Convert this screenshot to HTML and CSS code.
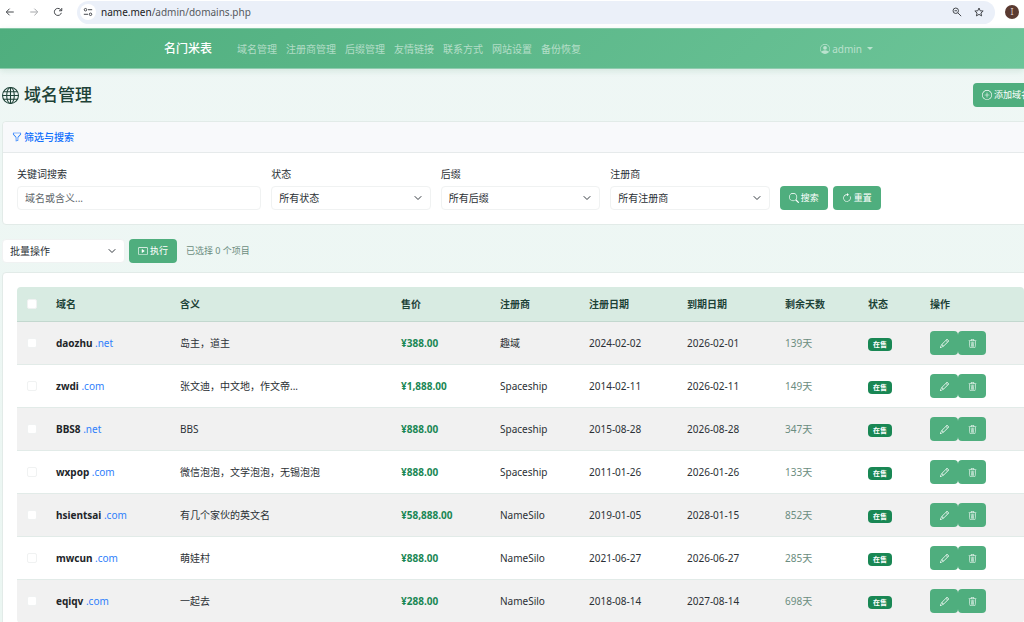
FILE: index.html
```html
<!DOCTYPE html>
<html lang="zh-CN">
<head>
<meta charset="utf-8">
<title>域名管理 - 名门米表</title>
<link rel="stylesheet" href="styles.css">
</head>
<body>
<svg class="sprite" aria-hidden="true">
  <symbol id="i-pencil" viewBox="0 0 16 16"><path d="M12.146.146a.5.5 0 0 1 .708 0l3 3a.5.5 0 0 1 0 .708l-10 10a.5.5 0 0 1-.168.11l-5 2a.5.5 0 0 1-.65-.65l2-5a.5.5 0 0 1 .11-.168zM11.207 2.5 13.5 4.793 14.793 3.5 12.5 1.207zm1.586 3L10.5 3.207 4 9.707V10h.5a.5.5 0 0 1 .5.5v.5h.5a.5.5 0 0 1 .5.5v.5h.293zm-9.761 5.175-.106.106-1.528 3.821 3.821-1.528.106-.106A.5.5 0 0 1 5 12.5V12h-.5a.5.5 0 0 1-.5-.5V11h-.5a.5.5 0 0 1-.468-.325"/></symbol>
  <symbol id="i-trash" viewBox="0 0 16 16"><path d="M6.5 1h3a.5.5 0 0 1 .5.5v1H6v-1a.5.5 0 0 1 .5-.5M11 2.500v-1A1.500 1.500 0 0 0 9.500 0h-3A1.500 1.500 0 0 0 5 1.500v1H1.500a.5.5 0 0 0 0 1h.538l.853 10.660A2 2 0 0 0 4.885 16h6.230a2 2 0 0 0 1.994-1.840l.853-10.660h.538a.5.5 0 0 0 0-1zm1.958 1-.846 10.580a1 1 0 0 1-.997.920h-6.230a1 1 0 0 1-.997-.920L3.042 3.500zm-7.487 1a.5.5 0 0 1 .528.470l.5 8.500a.5.5 0 0 1-.998.060L5 5.030a.5.5 0 0 1 .470-.530m5.058 0a.5.5 0 0 1 .470.530l-.5 8.500a.5.5 0 1 1-.998-.060l.5-8.500a.5.5 0 0 1 .528-.470M8 4.500a.5.5 0 0 1 .5.5v8.500a.5.5 0 0 1-1 0V5a.5.5 0 0 1 .5-.5"/></symbol>
</svg>

<header class="browser">
  <div class="browser-nav">
    <button type="button" aria-label="后退"><svg viewBox="0 0 24 24"><path class="line" d="M21 12H4M11 4l-8 8 8 8"/></svg></button>
    <button type="button" aria-label="前进" disabled><svg viewBox="0 0 24 24"><path class="line" d="M3 12h17M13 4l8 8-8 8"/></svg></button>
    <button type="button" aria-label="刷新"><svg viewBox="0 0 24 24"><path class="line" d="M20 14a8.500 8.500 0 1 1-2-8l3 3M21 2.500V9h-6.500"/></svg></button>
  </div>
  <div class="address">
    <span class="site-info"><svg viewBox="0 0 24 24"><path class="line" d="M12 6.500h10M2 17.500h10"/><circle class="line" cx="6" cy="6.500" r="3"/><circle class="line" cx="18" cy="17.500" r="3"/></svg></span>
    <span class="url">name.men<span class="path">/admin/domains.php</span></span>
    <button type="button" aria-label="缩放"><svg viewBox="0 0 24 24"><circle class="line" cx="9" cy="9" r="6.500"/><path class="line" d="M14 14l8 8M6 9h6"/></svg></button>
    <button type="button" aria-label="收藏"><svg viewBox="0 0 24 24"><path class="line" d="M12 2.500l2.900 6.600 7.100.600-5.400 4.700 1.700 7L12 17.700l-6.300 3.700 1.700-7L2 9.700l7.100-.600z"/></svg></button>
  </div>
  <button type="button" class="avatar">I</button>
</header>

<nav class="navbar">
  <a class="brand" href="#">名门米表</a>
  <ul class="menu">
    <li><a href="#">域名管理</a></li>
    <li><a href="#">注册商管理</a></li>
    <li><a href="#">后缀管理</a></li>
    <li><a href="#">友情链接</a></li>
    <li><a href="#">联系方式</a></li>
    <li><a href="#">网站设置</a></li>
    <li><a href="#">备份恢复</a></li>
  </ul>
  <a class="user" href="#"><svg class="icon" viewBox="0 0 16 16"><path d="M11 6a3 3 0 1 1-6 0 3 3 0 0 1 6 0"/><path fill-rule="evenodd" d="M0 8a8 8 0 1 1 16 0A8 8 0 0 1 0 8m8-7a7 7 0 0 0-5.468 11.370C3.242 11.226 4.805 10 8 10s4.757 1.225 5.468 2.370A7 7 0 0 0 8 1"/></svg>admin<span class="caret"></span></a>
</nav>

<main class="page">
  <div class="page-head">
    <h1><svg class="globe" viewBox="0 0 16 16"><g class="thin"><circle cx="8" cy="8" r="7.500"/><ellipse cx="8" cy="8" rx="3.600" ry="7.500"/><path d="M8 .5v15M.5 8h15M1.700 4.500h12.600M1.700 11.500h12.600"/></g></svg>域名管理</h1>
    <button type="button" class="btn"><svg class="icon" viewBox="0 0 16 16"><path d="M8 15A7 7 0 1 1 8 1a7 7 0 0 1 0 14m0 1A8 8 0 1 0 8 0a8 8 0 0 0 0 16"/><path d="M8 4a.5.5 0 0 1 .5.5v3h3a.5.5 0 0 1 0 1h-3v3a.5.5 0 0 1-1 0v-3h-3a.5.5 0 0 1 0-1h3v-3A.5.5 0 0 1 8 4"/></svg>添加域名</button>
  </div>

  <section class="card filter">
    <h2 class="card-header"><svg class="icon" viewBox="0 0 16 16"><path d="M1.500 1.500A.5.5 0 0 1 2 1h12a.5.5 0 0 1 .5.5v2a.5.5 0 0 1-.128.334L10 8.692V13.500a.5.5 0 0 1-.342.474l-3 1A.5.5 0 0 1 6 14.500V8.692L1.628 3.834A.5.5 0 0 1 1.500 3.500zm1 .5v1.308l4.372 4.858A.5.5 0 0 1 7 8.500v5.306l2-.666V8.500a.5.5 0 0 1 .128-.334L13.500 3.308V2z"/></svg>筛选与搜索</h2>
    <form class="filter-form">
      <div class="field wide"><label for="keyword">关键词搜索</label><input class="control" id="keyword" type="text" placeholder="域名或含义..."></div>
      <div class="field"><label for="status">状态</label><select class="control" id="status"><option>所有状态</option></select></div>
      <div class="field"><label for="suffix">后缀</label><select class="control" id="suffix"><option>所有后缀</option></select></div>
      <div class="field"><label for="registrar">注册商</label><select class="control" id="registrar"><option>所有注册商</option></select></div>
      <div class="field-actions">
        <button type="button" class="btn"><svg class="icon" viewBox="0 0 16 16"><path d="M11.742 10.344a6.500 6.500 0 1 0-1.397 1.398h-.001q.044.060.098.115l3.850 3.850a1 1 0 0 0 1.415-1.414l-3.850-3.850a1 1 0 0 0-.115-.100zM12 6.500a5.500 5.500 0 1 1-11 0 5.500 5.500 0 0 1 11 0"/></svg>搜索</button>
        <button type="reset" class="btn"><svg class="icon" viewBox="0 0 16 16"><path fill-rule="evenodd" d="M8 3a5 5 0 1 0 4.546 2.914.5.5 0 0 1 .908-.417A6 6 0 1 1 8 2z"/><path d="M8 4.466V.534a.25.25 0 0 1 .410-.192l2.360 1.966c.120.100.120.284 0 .384L8.410 4.658A.25.25 0 0 1 8 4.466"/></svg>重置</button>
      </div>
    </form>
  </section>

  <div class="bulk">
    <select class="control bulk-select" aria-label="批量操作"><option>批量操作</option></select>
    <button type="button" class="btn"><svg class="icon" viewBox="0 0 16 16"><path d="M6.790 5.093A.5.5 0 0 0 6 5.500v5a.5.5 0 0 0 .790.407l3.500-2.500a.5.5 0 0 0 0-.814z"/><path d="M0 4a2 2 0 0 1 2-2h12a2 2 0 0 1 2 2v8a2 2 0 0 1-2 2H2a2 2 0 0 1-2-2zm15 0a1 1 0 0 0-1-1H2a1 1 0 0 0-1 1v8a1 1 0 0 0 1 1h12a1 1 0 0 0 1-1z"/></svg>执行</button>
    <span class="selected-count">已选择 0 个项目</span>
  </div>

  <section class="card list">
    <table class="domains">
      <colgroup><col class="c-check"><col class="c-name"><col><col class="c-price"><col class="c-registrar"><col class="c-date"><col class="c-date"><col class="c-days"><col class="c-status"><col class="c-actions"></colgroup>
      <thead>
        <tr><th><input type="checkbox" aria-label="全选"></th><th>域名</th><th>含义</th><th>售价</th><th>注册商</th><th>注册日期</th><th>到期日期</th><th>剩余天数</th><th>状态</th><th>操作</th></tr>
      </thead>
      <tbody>
        <tr><td><input type="checkbox" aria-label="daozhu.net"></td><td><strong>daozhu</strong> <span class="tld">.net</span></td><td>岛主，道主</td><td class="price">¥388.00</td><td>趣域</td><td>2024-02-02</td><td>2026-02-01</td><td class="days">139天</td><td><span class="badge">在售</span></td><td><div class="actions"><button type="button" class="btn" aria-label="编辑"><svg class="icon"><use href="#i-pencil"/></svg></button><button type="button" class="btn" aria-label="删除"><svg class="icon"><use href="#i-trash"/></svg></button></div></td></tr>
        <tr><td><input type="checkbox" aria-label="zwdi.com"></td><td><strong>zwdi</strong> <span class="tld">.com</span></td><td>张文迪，中文地，作文帝...</td><td class="price">¥1,888.00</td><td>Spaceship</td><td>2014-02-11</td><td>2026-02-11</td><td class="days">149天</td><td><span class="badge">在售</span></td><td><div class="actions"><button type="button" class="btn" aria-label="编辑"><svg class="icon"><use href="#i-pencil"/></svg></button><button type="button" class="btn" aria-label="删除"><svg class="icon"><use href="#i-trash"/></svg></button></div></td></tr>
        <tr><td><input type="checkbox" aria-label="BBS8.net"></td><td><strong>BBS8</strong> <span class="tld">.net</span></td><td>BBS</td><td class="price">¥888.00</td><td>Spaceship</td><td>2015-08-28</td><td>2026-08-28</td><td class="days">347天</td><td><span class="badge">在售</span></td><td><div class="actions"><button type="button" class="btn" aria-label="编辑"><svg class="icon"><use href="#i-pencil"/></svg></button><button type="button" class="btn" aria-label="删除"><svg class="icon"><use href="#i-trash"/></svg></button></div></td></tr>
        <tr><td><input type="checkbox" aria-label="wxpop.com"></td><td><strong>wxpop</strong> <span class="tld">.com</span></td><td>微信泡泡，文学泡泡，无锡泡泡</td><td class="price">¥888.00</td><td>Spaceship</td><td>2011-01-26</td><td>2026-01-26</td><td class="days">133天</td><td><span class="badge">在售</span></td><td><div class="actions"><button type="button" class="btn" aria-label="编辑"><svg class="icon"><use href="#i-pencil"/></svg></button><button type="button" class="btn" aria-label="删除"><svg class="icon"><use href="#i-trash"/></svg></button></div></td></tr>
        <tr><td><input type="checkbox" aria-label="hsientsai.com"></td><td><strong>hsientsai</strong> <span class="tld">.com</span></td><td>有几个家伙的英文名</td><td class="price">¥58,888.00</td><td>NameSilo</td><td>2019-01-05</td><td>2028-01-15</td><td class="days">852天</td><td><span class="badge">在售</span></td><td><div class="actions"><button type="button" class="btn" aria-label="编辑"><svg class="icon"><use href="#i-pencil"/></svg></button><button type="button" class="btn" aria-label="删除"><svg class="icon"><use href="#i-trash"/></svg></button></div></td></tr>
        <tr><td><input type="checkbox" aria-label="mwcun.com"></td><td><strong>mwcun</strong> <span class="tld">.com</span></td><td>萌娃村</td><td class="price">¥888.00</td><td>NameSilo</td><td>2021-06-27</td><td>2026-06-27</td><td class="days">285天</td><td><span class="badge">在售</span></td><td><div class="actions"><button type="button" class="btn" aria-label="编辑"><svg class="icon"><use href="#i-pencil"/></svg></button><button type="button" class="btn" aria-label="删除"><svg class="icon"><use href="#i-trash"/></svg></button></div></td></tr>
        <tr><td><input type="checkbox" aria-label="eqiqv.com"></td><td><strong>eqiqv</strong> <span class="tld">.com</span></td><td>一起去</td><td class="price">¥288.00</td><td>NameSilo</td><td>2018-08-14</td><td>2027-08-14</td><td class="days">698天</td><td><span class="badge">在售</span></td><td><div class="actions"><button type="button" class="btn" aria-label="编辑"><svg class="icon"><use href="#i-pencil"/></svg></button><button type="button" class="btn" aria-label="删除"><svg class="icon"><use href="#i-trash"/></svg></button></div></td></tr>
      </tbody>
    </table>
  </section>
</main>
</body>
</html>
```
FILE: styles.css
```css
:root {
  --green: #4fae7e;
  --ink: #2b3035;
  --line: #e2ebe8;
}

* { box-sizing: border-box; }

html {
  overflow-x: hidden;
  scrollbar-width: none;
}

body {
  margin: 0;
  overflow-x: hidden;
  background: linear-gradient(#eff7f5, #ebf6f2);
  color: var(--ink);
  font: 10px/16px "Noto Sans", "Noto Sans CJK SC", sans-serif;
}

button, input, select { font: inherit; color: inherit; }
button { padding: 0; border: 0; background: none; }
a { color: inherit; text-decoration: none; }
svg { display: block; }

.sprite { display: none; }

.icon {
  flex: none;
  width: 10px;
  height: 10px;
  fill: currentColor;
}

.line {
  fill: none;
  stroke: currentColor;
  stroke-width: 2.4;
}

/* Browser toolbar */
.browser {
  display: flex;
  align-items: center;
  gap: 10px;
  height: 28px;
  padding: 0 5px 4px;
  background: #fff;
  color: #45484d;
}

.browser-nav {
  display: flex;
  gap: 14px;
  width: 62px;
}

.browser svg { width: 10px; height: 10px; }
.browser button:disabled { color: #a5a7aa; }

.address {
  flex: 1;
  display: flex;
  align-items: center;
  gap: 12px;
  height: 23px;
  padding: 0 11px 0 3px;
  border-radius: 12px;
  background: #ebf0f9;
}

.site-info {
  padding: 3px;
  border-radius: 50%;
  background: #fff;
}

.url {
  flex: 1;
  margin-left: -7px;
  color: #202124;
}

.url .path { color: #55585d; }

.browser .avatar {
  width: 14px;
  height: 14px;
  border-radius: 50%;
  background: #5a3a31;
  color: #d8c9c4;
  font-size: 9px;
  line-height: 14px;
}

/* Site navigation */
.navbar {
  display: flex;
  align-items: center;
  height: 41px;
  padding: 0 151px 0 164px;
  border-top: 1px solid #82c6a4;
  border-bottom: 1px solid #8fcbae;
  background: linear-gradient(135deg, #4fae7e, #6cc498);
  box-shadow: 0 2px 6px rgba(60, 140, 100, .15);
  color: rgba(255, 255, 255, .55);
}

.brand {
  color: #fff;
  font-size: 12px;
  font-weight: 500;
}

.menu {
  flex: 1;
  display: flex;
  gap: 9px;
  margin: 0;
  padding: 0 0 0 25px;
  list-style: none;
}

.user {
  display: flex;
  align-items: center;
  gap: 2px;
}

.caret {
  margin-left: 3px;
  border: 3px solid transparent;
  border-top-color: currentColor;
  border-bottom: 0;
}

.page {
  margin: 0 -15px 0 2px;
  padding-top: 14px;
}

.page-head {
  display: flex;
  align-items: center;
  justify-content: space-between;
  margin-bottom: 14px;
}

h1 {
  display: flex;
  align-items: center;
  gap: 5px;
  margin: 0;
  color: #1d4237;
  font-size: 17px;
  font-weight: 500;
  line-height: 24px;
}

.globe { width: 17px; height: 17px; }

.thin {
  fill: none;
  stroke: currentColor;
  stroke-width: 1;
}

.btn {
  display: inline-flex;
  align-items: center;
  justify-content: center;
  gap: 2px;
  height: 24px;
  padding: 0 9px;
  border-radius: 4px;
  background: var(--green);
  color: #fff;
  font-size: 9px;
  white-space: nowrap;
}

.card {
  border: 1px solid var(--line);
  border-radius: 4px;
  background: #fff;
}

.card-header {
  display: flex;
  align-items: center;
  gap: 2px;
  margin: 0;
  padding: 7px 9px;
  border-bottom: 1px solid #e6eaeb;
  border-radius: 4px 4px 0 0;
  background: #f8f9fb;
  color: #0d6efd;
  font-size: 10px;
  font-weight: 500;
}

.filter-form {
  display: grid;
  grid-template-columns: repeat(12, 1fr);
  gap: 10px;
  padding: 13px 14px 14px;
}

.field {
  grid-column: span 2;
  display: grid;
  gap: 4px;
}

.field.wide { grid-column: span 3; }

.field-actions {
  grid-column: span 3;
  display: flex;
  align-items: flex-end;
  gap: 5px;
}

.control {
  width: 100%;
  height: 24px;
  padding: 0 7px;
  border: 1px solid #f0f2f2;
  border-radius: 4px;
  background: #fff;
  appearance: none;
}

.control::placeholder { color: #62686d; }

select.control {
  background: #fff url("data:image/svg+xml,%3Csvg xmlns='http://www.w3.org/2000/svg' viewBox='0 0 16 16'%3E%3Cpath fill='none' stroke='%23343a40' stroke-linecap='round' stroke-linejoin='round' stroke-width='2' d='m2 5 6 6 6-6'/%3E%3C/svg%3E") no-repeat right 8px center / 8px;
}

.bulk {
  display: flex;
  align-items: center;
  gap: 4px;
  margin: 14px 0 9px;
}

.bulk-select { width: 123px; }

.selected-count {
  margin-left: 5px;
  color: #6c8d80;
  font-size: 9px;
}

/* Domain table */
.list { padding: 14px; }

.domains {
  width: 100%;
  table-layout: fixed;
  border-collapse: separate;
  border-spacing: 0;
  border-radius: 4px;
  overflow: hidden;
}

.c-check { width: 29px; }
.c-name { width: 124px; }
.c-price { width: 99px; }
.c-registrar { width: 89px; }
.c-date { width: 98px; }
.c-days { width: 83px; }
.c-status { width: 62px; }
.c-actions { width: 104px; }

.domains th,
.domains td {
  height: 43px;
  padding: 0 10px;
  border-bottom: 1px solid var(--line);
  text-align: left;
  white-space: nowrap;
}

.domains th {
  height: 35px;
  border-bottom-color: #c3d8cf;
  background: #d8ebe2;
  color: #1d4237;
  font-weight: 700;
}

.domains tbody tr:nth-child(odd) { background: #f1f1f1; }

.domains input {
  display: block;
  width: 10px;
  height: 10px;
  margin: 0;
  border: 1px solid #f0f2f2;
  border-radius: 2px;
  background: #fff;
  appearance: none;
}

.domains strong { color: #212529; }

.tld { color: #2f80fb; }

.domains .price {
  color: #198754;
  font-weight: 700;
}

.domains .days { color: #6c8d80; }

.badge {
  display: inline-block;
  padding: 0 5px;
  border-radius: 4px;
  background: #198754;
  color: #fff;
  font-size: 7px;
  font-weight: 700;
  line-height: 13px;
  vertical-align: middle;
}

.actions {
  display: flex;
}

.actions .btn { width: 28px; padding: 0; }
.actions .icon { width: 9px; height: 9px; }
```
